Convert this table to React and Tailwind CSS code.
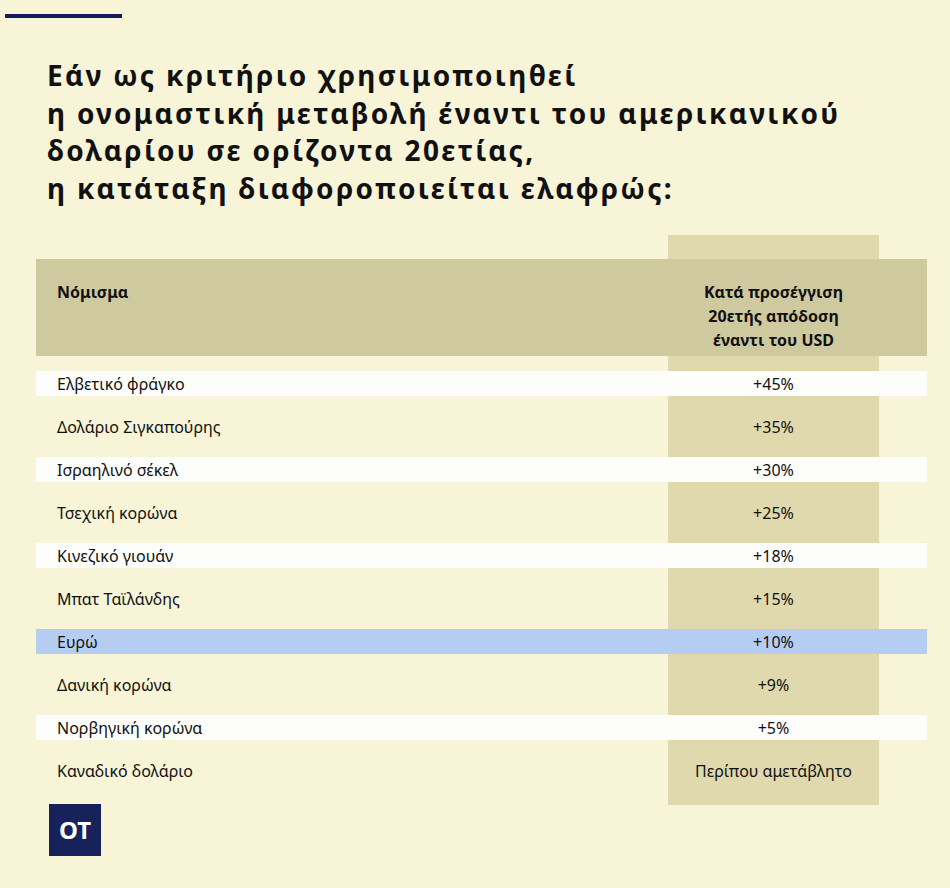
const rows = [
  { name: 'Ελβετικό φράγκο', value: '+45%', band: 'white' },
  { name: 'Δολάριο Σιγκαπούρης', value: '+35%' },
  { name: 'Ισραηλινό σέκελ', value: '+30%', band: 'white' },
  { name: 'Τσεχική κορώνα', value: '+25%' },
  { name: 'Κινεζικό γιουάν', value: '+18%', band: 'white' },
  { name: 'Μπατ Ταϊλάνδης', value: '+15%' },
  { name: 'Ευρώ', value: '+10%', band: 'blue' },
  { name: 'Δανική κορώνα', value: '+9%' },
  { name: 'Νορβηγική κορώνα', value: '+5%', band: 'white' },
  { name: 'Καναδικό δολάριο', value: 'Περίπου αμετάβλητο' },
];

function bandClass(band) {
  if (band === 'white') return 'bg-[#fdfefb]';
  if (band === 'blue') return 'bg-[#b6cdf2]';
  return '';
}

export default function App() {
  return (
    <div
      className="min-h-[888px] w-[950px] bg-[#f7f4d8] pt-[14px] text-[#111111]"
      style={{ fontFamily: '"Noto Sans", "DejaVu Sans", sans-serif' }}
    >
      <div className="ml-[5px] h-[4px] w-[117px] bg-[#13195a]" />

      <h1 className="ml-[47px] mt-[39px] text-[28px] font-bold leading-[37.5px] tracking-[2.3px]">
        Εάν ως κριτήριο χρησιμοποιηθεί
        <br />
        η ονομαστική μεταβολή έναντι του αμερικανικού
        <br />
        δολαρίου σε ορίζοντα 20ετίας,
        <br />
        η κατάταξη διαφοροποιείται ελαφρώς:
      </h1>

      <div className="relative ml-[36px] mt-[28px] w-[891px] pt-[24px] pb-[22px]">
        <div className="absolute left-[632px] top-0 bottom-0 w-[211px] bg-[#dfd9ad]" />

        <div className="relative flex h-[97px] bg-[#cfc9a0]">
          <div className="flex-1 pl-[21px] pt-[21px] text-[16px] font-bold">Νόμισμα</div>
          <div className="mr-[48px] w-[211px] pt-[21px] text-center text-[16px] font-bold leading-[24px]">
            Κατά προσέγγιση
            <br />
            20ετής απόδοση
            <br />
            έναντι του USD
          </div>
        </div>

        <div className="relative flex flex-col gap-[18px] pt-[15px]">
          {rows.map((row) => (
            <div key={row.name} className={`flex h-[25px] items-center text-[16px] ${bandClass(row.band)}`}>
              <div className="flex-1 pl-[21px]">{row.name}</div>
              <div className="mr-[48px] w-[211px] text-center">{row.value}</div>
            </div>
          ))}
        </div>
      </div>

      <div className="ml-[49px] -mt-[1px] flex h-[52px] w-[52px] items-center justify-center bg-[#17215a] text-[24px] font-bold text-white">
        OT
      </div>
    </div>
  );
}
